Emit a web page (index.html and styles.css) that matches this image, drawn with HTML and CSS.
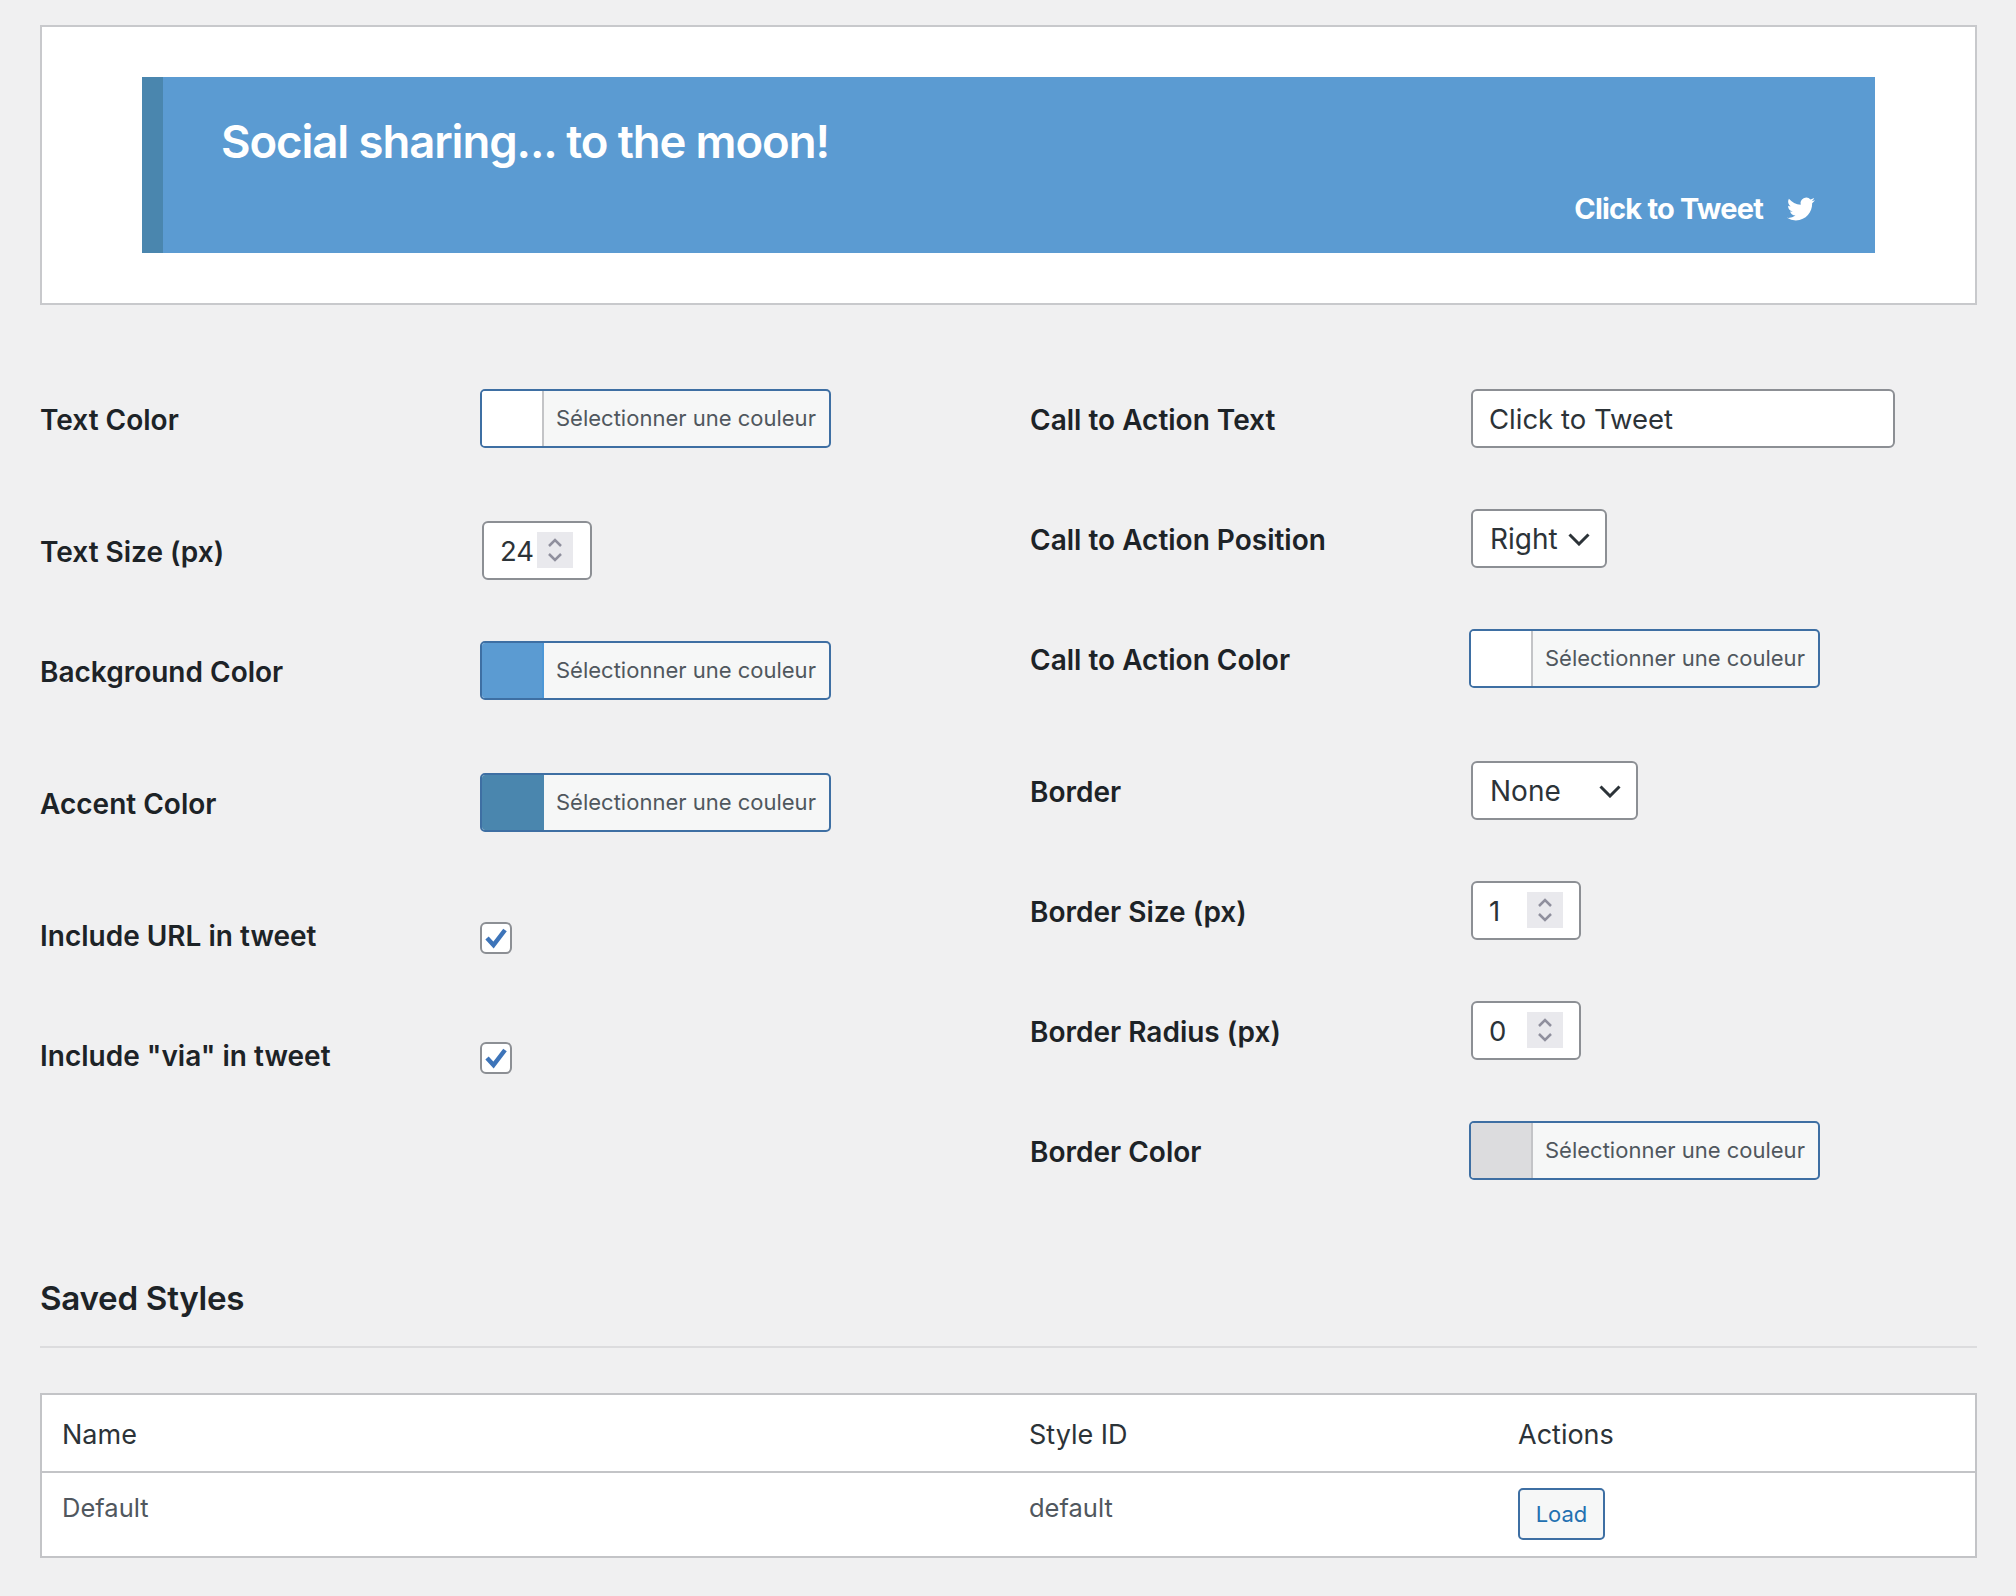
FILE: index.html
```html
<!DOCTYPE html>
<html lang="fr">
<head>
<meta charset="utf-8">
<title>Click to Tweet settings</title>
<link rel="stylesheet" href="styles.css">
</head>
<body>
<main class="page">
  <section class="preview-card">
    <div class="banner">
      <p class="banner-text">Social sharing... to the moon!</p>
      <p class="banner-cta"><span>Click to Tweet</span>
        <svg class="bird" viewBox="0 0 24 24"><path d="M23.953 4.57a10 10 0 01-2.825.775 4.958 4.958 0 002.163-2.723c-.951.555-2.005.959-3.127 1.184a4.92 4.92 0 00-8.384 4.482C7.69 8.095 4.067 6.13 1.64 3.162a4.822 4.822 0 00-.666 2.475c0 1.71.87 3.213 2.188 4.096a4.904 4.904 0 01-2.228-.616v.06a4.923 4.923 0 003.946 4.827 4.996 4.996 0 01-2.212.085 4.936 4.936 0 004.604 3.417 9.867 9.867 0 01-6.102 2.105c-.39 0-.779-.023-1.17-.067a13.995 13.995 0 007.557 2.209c9.053 0 13.998-7.496 13.998-13.985 0-.21 0-.42-.015-.63A9.935 9.935 0 0024 4.59z"/></svg>
      </p>
    </div>
  </section>

  <div class="settings">
    <div class="col col-left">
      <div class="row more"><span class="label">Text Color</span><button class="color"><i class="swatch sw-white"></i><b>Sélectionner une couleur</b></button></div>
      <div class="row"><span class="label">Text Size (px)</span><div class="field num"><span>24</span><i class="spin"><svg viewBox="0 0 36 36"><path d="M12 14l6-6 6 6M12 22l6 6 6-6"/></svg></i></div></div>
      <div class="row more"><span class="label">Background Color</span><button class="color"><i class="swatch sw-blue"></i><b>Sélectionner une couleur</b></button></div>
      <div class="row more"><span class="label">Accent Color</span><button class="color"><i class="swatch sw-accent"></i><b>Sélectionner une couleur</b></button></div>
      <div class="row"><span class="label">Include URL in tweet</span><span class="check"><svg viewBox="0 0 32 32"><path d="M7 16l6.500 7L25 8"/></svg></span></div>
      <div class="row"><span class="label">Include "via" in tweet</span><span class="check"><svg viewBox="0 0 32 32"><path d="M7 16l6.500 7L25 8"/></svg></span></div>
    </div>
    <div class="col col-right">
      <div class="row"><span class="label">Call to Action Text</span><div class="field text"><span>Click to Tweet</span></div></div>
      <div class="row"><span class="label">Call to Action Position</span><div class="field select sel-right"><span>Right</span><svg class="chev" viewBox="0 0 22 14"><path d="M1.500 2.500l9.500 9.500 9.500-9.500"/></svg></div></div>
      <div class="row more"><span class="label">Call to Action Color</span><button class="color"><i class="swatch sw-white"></i><b>Sélectionner une couleur</b></button></div>
      <div class="row"><span class="label">Border</span><div class="field select sel-none"><span>None</span><svg class="chev" viewBox="0 0 22 14"><path d="M1.500 2.500l9.500 9.500 9.500-9.500"/></svg></div></div>
      <div class="row"><span class="label">Border Size (px)</span><div class="field num"><span>1</span><i class="spin"><svg viewBox="0 0 36 36"><path d="M12 14l6-6 6 6M12 22l6 6 6-6"/></svg></i></div></div>
      <div class="row"><span class="label">Border Radius (px)</span><div class="field num"><span>0</span><i class="spin"><svg viewBox="0 0 36 36"><path d="M12 14l6-6 6 6M12 22l6 6 6-6"/></svg></i></div></div>
      <div class="row"><span class="label">Border Color</span><button class="color"><i class="swatch sw-grey"></i><b>Sélectionner une couleur</b></button></div>
    </div>
  </div>

  <h2 class="section-title">Saved Styles</h2>
  <table class="styles-table">
    <thead>
      <tr><th class="c-name">Name</th><th class="c-id">Style ID</th><th>Actions</th></tr>
    </thead>
    <tbody>
      <tr><td>Default</td><td>default</td><td><button class="load">Load</button></td></tr>
    </tbody>
  </table>
</main>
</body>
</html>
```
FILE: styles.css
```css
* { box-sizing: border-box; }
html, body { margin: 0; padding: 0; }
body {
  background: #f0f0f1;
  color: #1d2327;
  font-family: "Inter", "Liberation Sans", sans-serif;
  height: 1596px;
  overflow: hidden;
}
.page { padding: 25px 39px 0 40px; }

.preview-card {
  background: #fff;
  border: 2px solid #c8c9cc;
  height: 280px;
  padding: 50px 100px;
}
.banner {
  background: #5b9bd2;
  border-left: 21px solid #4a86ae;
  height: 176px;
  padding: 37px 60px 0 58px;
  color: #fff;
}
.banner-text {
  margin: 0;
  font-size: 45.500px;
  line-height: 56px;
  font-weight: 600;
  letter-spacing: -1.1px;
}
.banner-cta {
  margin: 21px 0 0;
  display: flex;
  justify-content: flex-end;
  align-items: center;
  gap: 24px;
  font-size: 29px;
  line-height: 36px;
  font-weight: 700;
  letter-spacing: -0.8px;
}
.bird { width: 28px; height: 28px; fill: #fff; }

.settings {
  display: grid;
  grid-template-columns: 990px 1fr;
  margin-top: 84px;
}
.col { display: flex; flex-direction: column; }
.row {
  display: flex;
  align-items: center;
  min-height: 59px;
  margin-bottom: 61px;
}
.row.more { margin-bottom: 73px; }
.label {
  flex: 0 0 441px;
  font-size: 28px;
  font-weight: 600;
  padding-top: 3px;
  color: #1d2327;
}
.col-right .row:last-child, .col-left .row:last-child { margin-bottom: 0; }

.color {
  display: flex;
  align-items: stretch;
  width: 351px;
  height: 59px;
  padding: 0;
  background: #f6f7f7;
  border: 2px solid #3e6fa3;
  border-radius: 5px;
  overflow: hidden;
  font-family: inherit;
  margin-left: -1px;
}
.col-right .color { margin-left: -2px; }
.col-left .field { margin-left: 1px; }
.swatch {
  flex: 0 0 62px;
  border-right: 2px solid #c3c4c7;
}
.sw-white { background: #fff; }
.sw-blue { background: #5b9bd2; border-right-color: #4d97d6; }
.sw-accent { background: #4a86ae; border-right-color: #4a86ae; }
.sw-grey { background: #dcdcde; }
.color b {
  flex: 1;
  font-weight: 400;
  font-size: 22px;
  line-height: 55px;
  color: #50575e;
  text-align: left;
  padding-left: 12px;
  white-space: nowrap;
}

.field {
  position: relative;
  display: flex;
  align-items: center;
  height: 59px;
  background: #fff;
  border: 2px solid #8c8f94;
  border-radius: 6px;
  padding-left: 16px;
  font-size: 27.500px;
  color: #2c3338;
}
.field.text { width: 424px; }
.field.num { width: 110px; }
.field.select { padding-left: 17px; font-size: 28px; }
.sel-right { width: 136px; }
.sel-none { width: 167px; }
.spin {
  position: absolute;
  right: 17px;
  top: 9px;
  width: 36px;
  height: 36px;
  background: #e9e9ed;
}
.col-right .spin { right: 16px; }
.spin svg { display: block; width: 36px; height: 36px; fill: none; stroke: #8f8f9d; stroke-width: 2.500; }
.chev {
  position: absolute;
  right: 15px;
  top: 21px;
  width: 22px;
  height: 14px;
  fill: none;
  stroke: #2c3338;
  stroke-width: 3;
}
.check {
  width: 32px;
  height: 32px;
  background: #fff;
  border: 2px solid #8c8f94;
  border-radius: 6px;
  margin: 6px 0 0 -1px;
  position: relative;
}
.check svg {
  position: absolute;
  left: -2px;
  top: -2px;
  width: 32px;
  height: 32px;
  fill: none;
  stroke: #3d74b9;
  stroke-width: 4.500;
}

.section-title {
  margin: 95px 0 0;
  padding-bottom: 24px;
  border-bottom: 2px solid #dcdcde;
  font-size: 33.200px;
  line-height: 47px;
  font-weight: 600;
  letter-spacing: -0.3px;
  color: #1d2327;
}
.styles-table {
  margin-top: 45px;
  width: 100%;
  table-layout: fixed;
  border-collapse: separate;
  border-spacing: 0;
  background: #fff;
  border: 2px solid #c3c4c7;
}
.styles-table th, .styles-table td {
  text-align: left;
  vertical-align: top;
  padding: 0;
}
.styles-table th {
  font-weight: 400;
  font-size: 27px;
  height: 77px;
  line-height: 72px;
  padding-top: 4px;
  border-bottom: 2px solid #c3c4c7;
  color: #2c3338;
}
.styles-table td {
  font-size: 25.500px;
  height: 83px;
  line-height: 36px;
  padding-top: 17px;
  color: #50575e;
}
.styles-table th:first-child, .styles-table td:first-child { padding-left: 20px; }
.c-name { width: 987px; }
.c-id { width: 489px; }
.load {
  display: block;
  margin-top: -2px;
  width: 87px;
  height: 52px;
  background: #f6f7f7;
  border: 2px solid #3e6fa3;
  border-radius: 5px;
  color: #2271b1;
  font-family: inherit;
  font-size: 22px;
  padding: 0;
}
```
